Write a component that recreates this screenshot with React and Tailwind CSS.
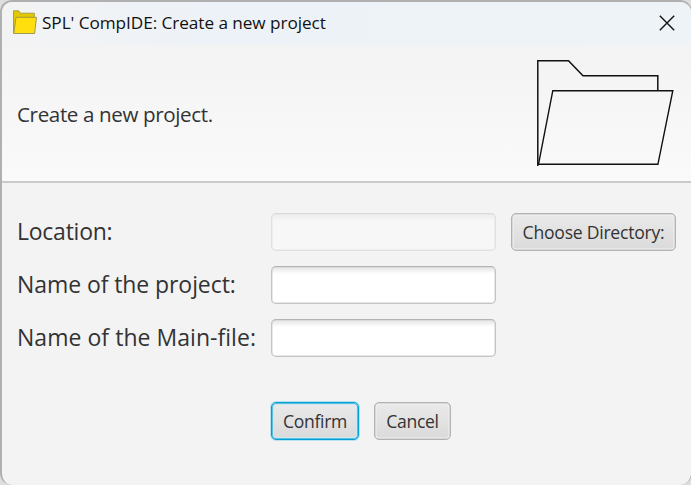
function FolderIcon() {
  return (
    <svg className="-mt-[3px] h-6 w-6 shrink-0" viewBox="0 0 24 24">
      <path d="M.5 23.2V.8h5.3l1.5 2.4h14v4.3" fill="#e3c800" stroke="#a39a3c" strokeWidth=".9" />
      <path d="M.7 23.5 3 7.3h20.5L21.6 23.5Z" fill="#ffdf0d" stroke="#97914a" strokeWidth=".9" />
    </svg>
  );
}

function FolderOutline() {
  return (
    <svg className="h-[110px] w-[140px]" viewBox="0 0 140 110" fill="none" stroke="#111" strokeWidth="1.5">
      <path d="M2.8 108V2.7h30.7L48 17.7h74.8v15" />
      <path d="M3.5 106.3 17.8 32.7h120L122.9 106.3Z" strokeWidth="1.4" />
    </svg>
  );
}

function Label({ children, className }) {
  return (
    <div className={`w-[254px] whitespace-nowrap text-[23px] leading-[37px] text-[#333] ${className}`}>
      {children}
    </div>
  );
}

function Field({ disabled }) {
  return (
    <input
      disabled={disabled}
      className="h-[38px] w-[225px] rounded-[5px] border border-[#c4c4c4] border-t-[#b4b4b4] bg-white bg-linear-to-b from-[#e4e4e4] to-white to-[7px] px-3 shadow-[inset_0_0_0_0.5px_#d0d0d0] outline-none disabled:opacity-40"
    />
  );
}

function Button({ children, className }) {
  return (
    <button
      className={`h-[38px] whitespace-nowrap rounded-[5px] border bg-linear-to-b from-[#eaeaea] to-[#dadada] text-[17.6px] leading-[36px] text-[#333] ${className}`}
    >
      {children}
    </button>
  );
}

const PLAIN = "border-[#b3b3b3] shadow-[inset_0_0_0_0.5px_#c0c0c0,inset_0_0_0_1.5px_#f1f1f1]";

export default function App() {
  return (
    <div className="h-[485px] w-[691px] overflow-hidden bg-[#dedede] font-['Open_Sans','Noto_Sans',sans-serif]">
      <div className="flex h-[485px] w-[692px] flex-col overflow-hidden rounded-[12px] border-2 border-r border-b-0 border-[#b0b0b0] bg-[#f3f3f3]">
        <header className="flex h-[43px] shrink-0 items-center bg-linear-to-r from-[#f3f3f3] via-[#edf2f8] via-30% to-[#eef3f7] pl-[11px] pr-[16px]">
          <FolderIcon />
          <h1 className="-mt-[2px] ml-[5px] grow whitespace-nowrap text-[17.2px] leading-6 tracking-[-0.06px] text-[#111]">
            SPL' CompIDE: Create a new project
          </h1>
          <svg className="-mt-[2px] h-4 w-4" viewBox="0 0 16 16" stroke="#111" strokeWidth="1.4">
            <path d="M.8.8 15.2 15.2M15.2.8.8 15.2" />
          </svg>
        </header>
        <section className="flex h-[138px] shrink-0 items-center justify-between border-b-2 border-[#cacaca] bg-linear-to-b from-[#f3f3f3] to-[#fafafa] pl-[15px] pr-[16px]">
          <p className="pt-[3px] text-[20.6px] tracking-[-0.38px] text-[#333]">Create a new project.</p>
          <FolderOutline />
        </section>
        <main className="flex flex-col gap-[15px] px-[15px] pt-[30px]">
          <div className="flex">
            <Label className="tracking-[-0.25px]">Location:</Label>
            <Field disabled />
            <Button className={`ml-[15px] w-[165px] tracking-[-0.25px] ${PLAIN}`}>Choose Directory:</Button>
          </div>
          <div className="flex">
            <Label className="tracking-[-0.08px]">Name of the project:</Label>
            <Field />
          </div>
          <div className="flex">
            <Label className="tracking-[0.04px]">Name of the Main-file:</Label>
            <Field />
          </div>
        </main>
        <footer className="flex gap-[15px] pl-[269px] pt-[45px]">
          <Button className="w-[88px] border-[#039ed3] tracking-[-0.35px] shadow-[0_0_0_1px_#b7e3f1,inset_0_0_0_1px_#5bbfe0,inset_0_0_0_2px_#cfe7ef]">
            Confirm
          </Button>
          <Button className={`w-[77px] tracking-[-0.35px] ${PLAIN}`}>Cancel</Button>
        </footer>
      </div>
    </div>
  );
}
